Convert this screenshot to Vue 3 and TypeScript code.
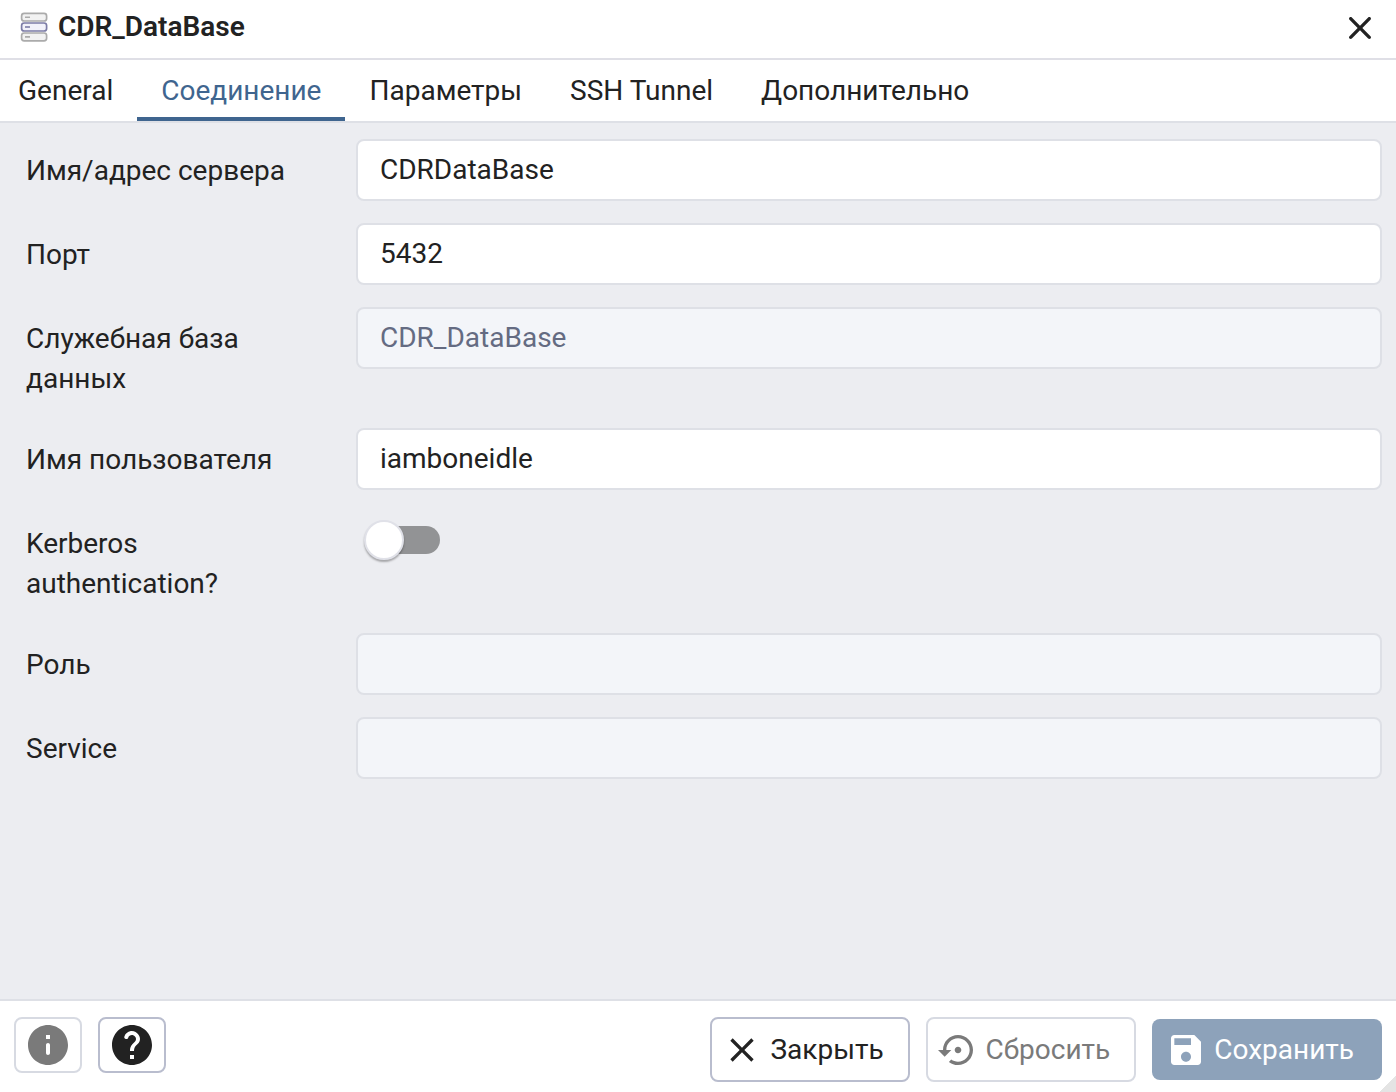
<script setup lang="ts">
import { reactive, ref } from 'vue'

interface Field {
  id: string
  label: string
  kind: 'text' | 'switch'
  disabled?: boolean
}

const tabs: string[] = ['General', 'Соединение', 'Параметры', 'SSH Tunnel', 'Дополнительно']
const activeTab = ref('Соединение')

const fields: Field[] = [
  { id: 'host', label: 'Имя/адрес сервера', kind: 'text' },
  { id: 'port', label: 'Порт', kind: 'text' },
  { id: 'db', label: 'Служебная база данных', kind: 'text', disabled: true },
  { id: 'username', label: 'Имя пользователя', kind: 'text' },
  { id: 'kerberos', label: 'Kerberos authentication?', kind: 'switch' },
  { id: 'role', label: 'Роль', kind: 'text', disabled: true },
  { id: 'service', label: 'Service', kind: 'text', disabled: true },
]

const values = reactive<Record<string, string>>({
  host: 'CDRDataBase',
  port: '5432',
  db: 'CDR_DataBase',
  username: 'iamboneidle',
  role: '',
  service: '',
})
const kerberos = ref(false)
</script>

<template>
  <div class="dialog">
    <header class="titlebar">
      <svg class="server-icon" viewBox="0 0 28 30" aria-hidden="true">
        <g stroke-width="1.7">
          <rect x="1.6" y="1.4" width="25" height="7.6" rx="2.6" fill="#f2f2f2" stroke="#ababab" />
          <rect x="1.6" y="21" width="25" height="7.8" rx="2.6" fill="#f2f2f2" stroke="#ababab" />
          <rect x="1.6" y="11" width="25" height="8" rx="2.6" fill="#f2f2fa" stroke="#7c7ca6" />
        </g>
        <path d="M5 5.2h5M5 24.9h5" stroke="#ababab" stroke-width="1.6" />
        <path d="M5 15h5" stroke="#7c7ca6" stroke-width="1.6" />
      </svg>
      <h1>CDR_DataBase</h1>
      <button class="close" type="button" aria-label="Close">
        <svg class="icon" viewBox="0 0 24 24"><path d="M18.3 5.71c-.39-.39-1.02-.39-1.41 0L12 10.59 7.11 5.7c-.39-.39-1.02-.39-1.41 0-.39.39-.39 1.02 0 1.41L10.59 12 5.7 16.89c-.39.39-.39 1.02 0 1.41.39.39 1.02.39 1.41 0L12 13.41l4.89 4.89c.39.39 1.02.39 1.41 0 .39-.39.39-1.02 0-1.41L13.41 12l4.89-4.89c.38-.38.38-1.02 0-1.4z" /></svg>
      </button>
    </header>

    <nav class="tabs" role="tablist">
      <button
        v-for="tab in tabs"
        :key="tab"
        type="button"
        role="tab"
        class="tab"
        :class="{ active: tab === activeTab }"
        :aria-selected="tab === activeTab"
        @click="activeTab = tab"
      >{{ tab }}</button>
    </nav>

    <form id="connection" class="form" @submit.prevent>
      <div v-for="field in fields" :key="field.id" class="row">
        <label :for="field.id">{{ field.label }}</label>
        <input
          v-if="field.kind === 'text'"
          :id="field.id"
          v-model="values[field.id]"
          class="text"
          type="text"
          :disabled="field.disabled"
        />
        <input v-else :id="field.id" v-model="kerberos" class="switch" type="checkbox" />
      </div>
    </form>

    <footer class="footer">
      <button class="btn square" type="button" disabled aria-label="Info">
        <svg class="icon large" viewBox="0 0 24 24"><path d="M12 2C6.48 2 2 6.48 2 12s4.48 10 10 10 10-4.48 10-10S17.52 2 12 2zm0 15c-.55 0-1-.45-1-1v-4c0-.55.45-1 1-1s1 .45 1 1v4c0 .55-.45 1-1 1zm1-8h-2V7h2v2z" /></svg>
      </button>
      <button class="btn square" type="button" aria-label="Help">
        <svg class="icon large" viewBox="0 0 24 24"><path d="M12 2C6.48 2 2 6.48 2 12s4.48 10 10 10 10-4.48 10-10S17.52 2 12 2zm1 17h-2v-2h2v2zm2.07-7.75l-.9.92c-.5.51-.86.97-1.04 1.69-.08.32-.13.68-.13 1.14h-2v-.5c0-.46.08-.9.22-1.31.2-.58.53-1.1.95-1.52l1.24-1.26c.46-.44.68-1.1.55-1.8-.13-.72-.69-1.33-1.39-1.53-1.11-.31-2.14.32-2.47 1.27-.12.37-.43.65-.82.65h-.3C8.4 9 8 8.44 8.16 7.88c.43-1.47 1.68-2.59 3.23-2.83 1.52-.24 2.97.55 3.87 1.8 1.18 1.63.83 3.38-.19 4.4z" /></svg>
      </button>
      <div class="actions">
        <button class="btn" type="button">
          <svg class="icon" viewBox="0 0 24 24"><path d="M19 6.41L17.59 5 12 10.59 6.41 5 5 6.41 10.59 12 5 17.59 6.41 19 12 13.41 17.59 19 19 17.59 13.41 12z" /></svg>
          Закрыть
        </button>
        <button class="btn" type="button" disabled>
          <svg class="icon" viewBox="0 0 24 24"><path d="M14 12c0-1.1-.9-2-2-2s-2 .9-2 2 .9 2 2 2 2-.9 2-2zm-2-9c-4.97 0-9 4.03-9 9H0l4 4 4-4H5c0-3.87 3.13-7 7-7s7 3.13 7 7-3.13 7-7 7c-1.51 0-2.91-.49-4.06-1.3l-1.42 1.44C8.04 20.3 9.94 21 12 21c4.97 0 9-4.03 9-9s-4.03-9-9-9z" /></svg>
          Сбросить
        </button>
        <button class="btn primary" type="submit" form="connection" disabled>
          <svg class="icon" viewBox="0 0 24 24"><path d="M17 3H5c-1.11 0-2 .9-2 2v14c0 1.1.89 2 2 2h14c1.1 0 2-.9 2-2V7l-4-4zm-5 16c-1.66 0-3-1.34-3-3s1.34-3 3-3 3 1.34 3 3-1.34 3-3 3zm3-10H5V5h10v4z" /></svg>
          Сохранить
        </button>
      </div>
      <span class="grip"></span>
    </footer>
  </div>
</template>

<style>
body {
  margin: 0;
}
</style>

<style scoped>
.dialog {
  display: flex;
  flex-direction: column;
  min-height: 100vh;
  background: #fff;
  color: #222;
  font: 28px/40px Roboto, 'Noto Sans', sans-serif;
}

.dialog *,
.dialog *::before {
  box-sizing: border-box;
}

button,
input {
  margin: 0;
  font: inherit;
  color: inherit;
}

.icon {
  flex: none;
  width: 40px;
  height: 40px;
  fill: currentColor;
}

.icon.large {
  width: 48px;
  height: 48px;
}

.titlebar {
  display: flex;
  align-items: center;
  height: 60px;
  padding: 0 16px 4px 20px;
  border-bottom: 2px solid #dfdfe6;
}

.server-icon {
  width: 28px;
  height: 30px;
  margin-right: 10px;
}

h1 {
  flex: 1;
  margin: 0;
  font-size: 28px;
  font-weight: 600;
  line-height: 40px;
}

.close {
  display: flex;
  padding: 2px 0 0;
  border: 0;
  background: none;
}

.tabs {
  display: flex;
  height: 63px;
  border-bottom: 2px solid #dee0e6;
}

.tab {
  padding: 4px 24px 0;
  border: 0;
  border-bottom: 4px solid transparent;
  background: none;
}

.tab:first-child {
  padding-left: 18px;
}

.tab.active {
  color: #3f658f;
  border-color: #3f658f;
}

.form {
  display: flex;
  flex: 1;
  flex-direction: column;
  gap: 22px;
  padding: 16px 14px;
  background: #ecedf1;
}

.row {
  display: grid;
  grid-template-columns: 1fr 3fr;
  align-items: start;
}

label {
  padding: 12px 40px 7px 12px;
}

.text {
  width: 100%;
  height: 62px;
  padding: 0 22px 2px;
  border: 2px solid #dee0e6;
  border-radius: 8px;
  background: #fff;
}

.text:disabled {
  background: #f3f5f9;
  color: #646b82;
}

.switch {
  position: relative;
  width: 68px;
  height: 28px;
  margin: 14px 16px;
  border-radius: 14px;
  appearance: none;
  background: #929395;
}

.switch::before {
  content: '';
  position: absolute;
  top: -6px;
  left: -8px;
  width: 40px;
  height: 40px;
  border: 2px solid #e0e1e8;
  border-radius: 50%;
  background: #fff;
  box-shadow: 0 2px 2px rgba(0, 0, 0, 0.3);
}

.switch:checked::before {
  left: 36px;
}

.footer {
  position: relative;
  display: flex;
  gap: 16px;
  padding: 16px 14px 10px;
  border-top: 2px solid #dee0e6;
}

.actions {
  display: flex;
  align-items: center;
  gap: 16px;
  margin-left: auto;
}

.btn {
  display: flex;
  align-items: center;
  gap: 8px;
  height: 65px;
  padding: 0 24px 0 10px;
  border: 2px solid #b9bdce;
  border-radius: 8px;
  background: #fff;
}

.btn:disabled {
  border-color: #d7dae2;
  color: #7a7a7a;
}

.btn.square {
  justify-content: center;
  width: 68px;
  height: 56px;
  padding: 0;
}

.btn.primary {
  height: 61px;
  padding: 0 28px 0 14px;
  border: 0;
  background: #8da2ba;
  color: #fff;
}

.grip {
  position: absolute;
  right: 0;
  bottom: 0;
  width: 16px;
  height: 16px;
  background: linear-gradient(135deg, transparent 50%, #e4e4e4 50%);
}
</style>
